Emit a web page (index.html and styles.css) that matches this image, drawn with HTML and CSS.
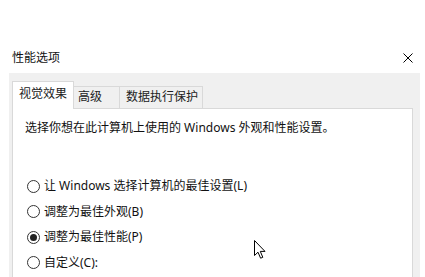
FILE: index.html
```html
<!DOCTYPE html>
<html lang="zh-CN">
<head>
<meta charset="utf-8">
<title>性能选项</title>
<link rel="stylesheet" href="styles.css">
</head>
<body>
<div class="window">
  <div class="titlebar">
    <span class="title">性能选项</span>
    <svg class="close" width="10" height="10" viewBox="0 0 10 10"><path d="M0.5 0.5 L9.5 9.5 M9.5 0.5 L0.5 9.5" stroke="#000" stroke-width="1" fill="none"/></svg>
  </div>
  <div class="body">
    <div class="tabs">
      <div class="tab active">视觉效果</div>
      <div class="tab t2">高级</div>
      <div class="tab t3">数据执行保护</div>
    </div>
    <div class="panel">
      <p class="desc">选择你想在此计算机上使用的 Windows 外观和性能设置。</p>
      <ul class="options">
        <li class="option"><span class="radio"></span>让 Windows 选择计算机的最佳设置(L)</li>
        <li class="option"><span class="radio"></span>调整为最佳外观(B)</li>
        <li class="option"><span class="radio checked"></span>调整为最佳性能(P)</li>
        <li class="option"><span class="radio"></span>自定义(C):</li>
      </ul>
    </div>
  </div>
  <svg class="cursor" width="13" height="20" viewBox="0 0 13 20"><path d="M0.5 0.5 L0.5 15.5 L4 12.2 L6.6 18.2 L8.8 17.3 L6.3 11.4 L11 11.4 Z" fill="#fff" stroke="#000" stroke-width="1" stroke-linejoin="miter"/></svg>
</div>
</body>
</html>
```

FILE: styles.css
```css
html, body {
  margin: 0;
  padding: 0;
  background: #fff;
}
body {
  font-family: "Noto Sans", "Noto Sans CJK SC", sans-serif;
  font-size: 12px;
  color: #000;
  width: 425px;
  height: 277px;
  overflow: hidden;
}
.window {
  position: relative;
  width: 425px;
  height: 277px;
  overflow: hidden;
}
.titlebar {
  display: flex;
  justify-content: space-between;
  align-items: center;
  height: 16px;
  padding: 50px 12px 7px 12px;
  line-height: 16px;
}
.title {
  color: #111;
}
.close {
  display: block;
}
.body {
  margin-left: 9px;
  width: 401px;
  background: #f0f0f0;
  padding: 8px 7px 0 3px;
  height: 196px;
}
.tabs {
  display: flex;
  align-items: flex-end;
  height: 27px;
  position: relative;
  z-index: 2;
}
.tab {
  box-sizing: border-box;
  height: 22px;
  line-height: 20px;
  border: 1px solid #d9d9d9;
  border-bottom: none;
  background: #f0f0f0;
  padding-left: 5px;
  white-space: nowrap;
  color: #222;
}
.tab.active {
  height: 28px;
  margin-bottom: -1px;
  width: 62px;
  background: #fff;
  padding-left: 6px;
  line-height: 24px;
}
.tab.t2 {
  width: 46px;
  border-left: none;
  padding-left: 4px;
}
.tab.t3 {
  width: 83px;
  border-left: none;
  padding-left: 6px;
}
.panel {
  background: #fff;
  border: 1px solid #d9d9d9;
  border-bottom: none;
  height: 157px;
  padding: 11px 12px 0 12px;
}
.desc {
  margin: 0;
  line-height: 16px;
  color: #111;
}
.options {
  list-style: none;
  margin: 42px 0 0 0;
  padding: 0;
  display: flex;
  flex-direction: column;
  gap: 9.5px;
}
.option {
  display: flex;
  align-items: center;
  height: 16px;
  line-height: 16px;
  color: #111;
}
.radio {
  box-sizing: border-box;
  width: 13px;
  height: 13px;
  border: 1px solid #333;
  border-radius: 50%;
  margin-left: 2px;
  margin-right: 4px;
  background: #fff;
  display: flex;
  align-items: center;
  justify-content: center;
}
.radio.checked::after {
  content: "";
  width: 7px;
  height: 7px;
  border-radius: 50%;
  background: #222;
}
.cursor {
  position: absolute;
  left: 254px;
  top: 240px;
  z-index: 5;
}
```
